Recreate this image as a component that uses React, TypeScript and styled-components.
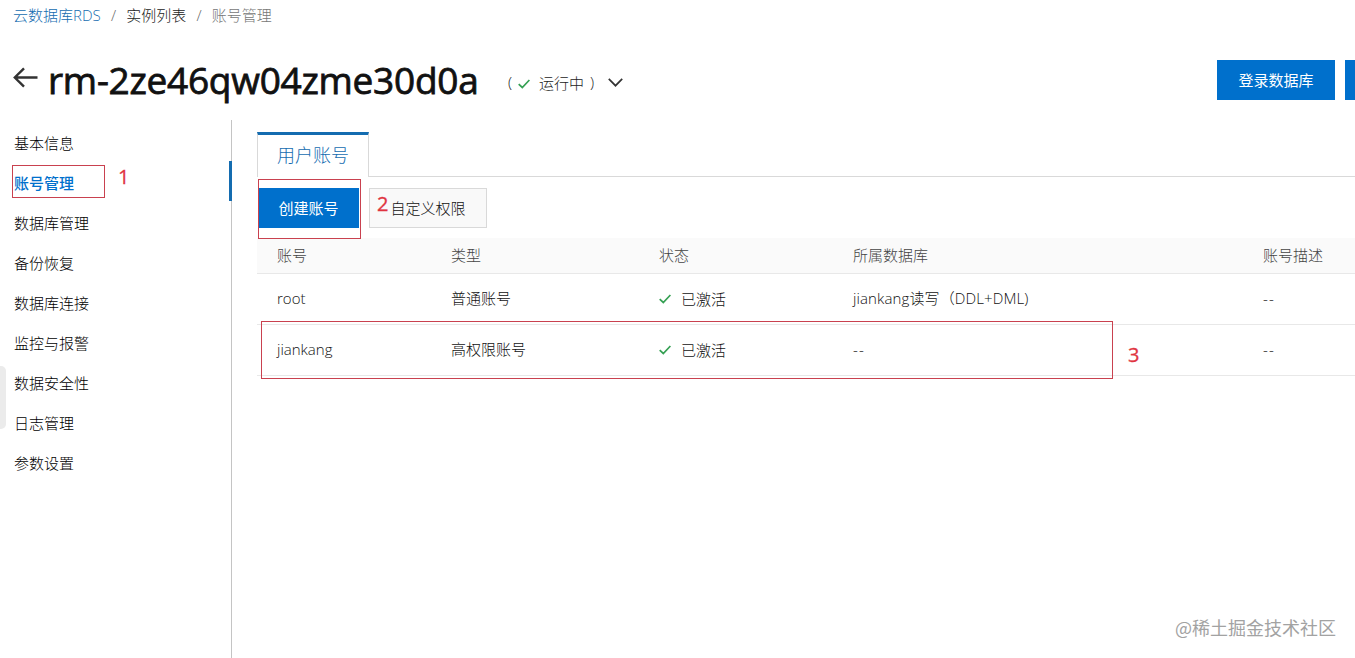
import React from "react";
import styled, { createGlobalStyle } from "styled-components";

const GlobalStyle = createGlobalStyle`
  * { box-sizing: border-box; }
  html, body { margin: 0; padding: 0; background: #fff; overflow: hidden; }
  body {
    font-family: "Open Sans", "Noto Sans CJK SC", sans-serif;
    font-size: 15px;
    font-weight: 300;
    color: #222;
    white-space: nowrap;
  }
`;

const Page = styled.div`
  position: relative;
  width: 1355px;
  height: 658px;
  overflow: hidden;
  display: flex;
  flex-direction: column;
`;

const Breadcrumb = styled.nav`
  display: flex;
  height: 32px;
  padding-left: 13px;
  line-height: 30px;
`;

const Crumb = styled.span<{ $color: string }>`
  color: ${(p) => p.$color};
`;

const Separator = styled.span`
  width: 25.5px;
  text-align: center;
  color: #666;
`;

const Header = styled.header`
  display: flex;
  align-items: flex-start;
  height: 88px;
  padding: 24px 0 0 13px;
`;

const BackIcon = styled.svg`
  width: 25px;
  height: 22px;
  margin: 10px 11px 0 0;
  flex: none;
`;

const Title = styled.h1`
  margin: -1px 0 0 -1px;
  width: 460px;
  font-size: 37px;
  font-weight: 400;
  letter-spacing: -0.25px;
  -webkit-text-stroke: 0.8px #111;
  line-height: 50px;
  color: #111;
`;

const Status = styled.div`
  display: flex;
  align-items: center;
  height: 24px;
  margin-top: 14px;
  color: #222;
`;

const StatusText = styled.span`
  margin: 0 6px 0 9px;
`;

const Check = styled.svg`
  width: 12px;
  height: 10px;
  flex: none;
`;

const StatusCheck = styled.span`
  display: flex;
  margin: 4px 0 0 6px;
`;

const Chevron = styled.svg`
  width: 15px;
  height: 9px;
  margin: 1px 0 0 14px;
`;

const HeaderActions = styled.div`
  display: flex;
  gap: 10px;
  width: 138px;
  margin-left: auto;
  margin-top: 4px;
  overflow: hidden;
`;

const Button = styled.button<{ $primary?: boolean; $width: number }>`
  flex: none;
  width: ${(p) => p.$width}px;
  height: 40px;
  padding: 0 0 2px;
  font: inherit;
  font-weight: ${(p) => (p.$primary ? 400 : 300)};
  border: 1px solid ${(p) => (p.$primary ? "#0070cc" : "#d9d9d9")};
  background: ${(p) => (p.$primary ? "#0070cc" : "#f9f9f9")};
  color: ${(p) => (p.$primary ? "#fff" : "#111")};
`;

const Body = styled.div`
  display: flex;
  flex: 1;
  min-height: 0;
`;

const Sidebar = styled.aside`
  width: 232px;
  padding-top: 1px;
  border-right: 1px solid #c4c4c4;
`;

const NavItem = styled.div<{ $active?: boolean }>`
  height: 40px;
  padding-left: 14px;
  line-height: 45px;
  margin-right: -1px;
  color: ${(p) => (p.$active ? "#0070cc" : "#000")};
  font-weight: ${(p) => (p.$active ? 500 : 300)};
  border-right: 3px solid ${(p) => (p.$active ? "#146cb0" : "transparent")};
`;

const Main = styled.main`
  flex: 1;
  min-width: 0;
  padding: 12px 0 0 25px;
`;

const TabBar = styled.div`
  display: flex;
  height: 45px;
  box-shadow: inset 0 -1px #d9d9d9;
`;

const Tab = styled.div`
  width: 112px;
  border: 1px solid #d9d9d9;
  border-top: 3px solid #146cb0;
  border-bottom: 0;
  background: #fff;
  color: #146cb0;
  font-size: 18px;
  line-height: 41px;
  text-align: center;
`;

const Toolbar = styled.div`
  display: flex;
  gap: 10px;
  padding: 11px 0 10px 1px;
`;

const Row = styled.div<{ $head?: boolean }>`
  display: grid;
  grid-template-columns: 174px 208px 194px 410px 1fr;
  align-items: center;
  height: ${(p) => (p.$head ? 36 : 51)}px;
  padding: 0 0 ${(p) => (p.$head ? 2 : 3)}px 20px;
  border-bottom: 1px solid #e8e8e8;
  background: ${(p) => (p.$head ? "#fafafa" : "transparent")};
  color: ${(p) => (p.$head ? "#444" : "#111")};
`;

const StateCell = styled.div`
  display: flex;
  align-items: center;
  gap: 10px;
  padding-top: 2px;
`;

const Database = styled.span`
  letter-spacing: 0.12px;
`;

const Empty = styled.span`
  letter-spacing: 1.1px;
`;

const Mark = styled.div<{ $x: number; $y: number; $w: number; $h: number }>`
  position: absolute;
  left: ${(p) => p.$x}px;
  top: ${(p) => p.$y}px;
  width: ${(p) => p.$w}px;
  height: ${(p) => p.$h}px;
  border: 1px solid #c9414f;
`;

const MarkNumber = styled.span<{ $x: number; $y: number }>`
  position: absolute;
  left: ${(p) => p.$x}px;
  top: ${(p) => p.$y}px;
  color: #e0343f;
  font-size: 20px;
  font-weight: 400;
  -webkit-text-stroke: 0.3px #e0343f;
  line-height: 24px;
`;

const EdgeHandle = styled.div`
  position: absolute;
  left: 0;
  top: 366px;
  width: 6px;
  height: 63px;
  border-radius: 0 5px 5px 0;
  background: #ebebeb;
`;

const Watermark = styled.div`
  position: absolute;
  right: 19px;
  bottom: 18px;
  font-size: 18px;
  font-weight: 400;
  line-height: 26px;
  color: #a2a2a2;
  font-family: "Noto Sans CJK SC", sans-serif;
`;

const CheckIcon = () => (
  <Check viewBox="0 0 12 10" fill="none" stroke="#35a053" strokeWidth="1.7">
    <path d="M.7 5.2 4.3 8.5 11.4 1" />
  </Check>
);

const navItems = [
  "基本信息", "账号管理", "数据库管理", "备份恢复", "数据库连接",
  "监控与报警", "数据安全性", "日志管理", "参数设置",
];

const accounts = [
  { name: "root", type: "普通账号", db: "jiankang读写（DDL+DML)" },
  { name: "jiankang", type: "高权限账号", db: "" },
];

export default function App() {
  return (
    <Page>
      <GlobalStyle />
      <Breadcrumb>
        <Crumb $color="#146cb0">云数据库RDS</Crumb>
        <Separator>/</Separator>
        <Crumb $color="#222">实例列表</Crumb>
        <Separator>/</Separator>
        <Crumb $color="#777">账号管理</Crumb>
      </Breadcrumb>
      <Header>
        <BackIcon viewBox="0 0 25 22" fill="none" stroke="#333" strokeWidth="2.4">
          <path d="M24.5 11.5H2M11 2.3 1.8 11.5 11 20.7" />
        </BackIcon>
        <Title>rm-2ze46qw04zme30d0a</Title>
        <Status>
          <span>(</span>
          <StatusCheck>
            <CheckIcon />
          </StatusCheck>
          <StatusText>运行中</StatusText>
          <span>)</span>
          <Chevron viewBox="0 0 15 9" fill="none" stroke="#333" strokeWidth="1.7">
            <path d="m.8.9 6.7 6.8L14.2.9" />
          </Chevron>
        </Status>
        <HeaderActions>
          <Button $primary $width={118}>登录数据库</Button>
          <Button $primary $width={118} />
        </HeaderActions>
      </Header>
      <Body>
        <Sidebar>
          {navItems.map((item) => (
            <NavItem key={item} $active={item === "账号管理"}>{item}</NavItem>
          ))}
        </Sidebar>
        <Main>
          <TabBar>
            <Tab>用户账号</Tab>
          </TabBar>
          <Toolbar>
            <Button $primary $width={101}>创建账号</Button>
            <Button $width={118}>自定义权限</Button>
          </Toolbar>
          <Row $head>
            <span>账号</span>
            <span>类型</span>
            <span>状态</span>
            <span>所属数据库</span>
            <span>账号描述</span>
          </Row>
          {accounts.map((a) => (
            <Row key={a.name}>
              <span>{a.name}</span>
              <span>{a.type}</span>
              <StateCell>
                <CheckIcon />
                已激活
              </StateCell>
              {a.db ? <Database>{a.db}</Database> : <Empty>--</Empty>}
              <Empty>--</Empty>
            </Row>
          ))}
        </Main>
      </Body>
      <EdgeHandle />
      <Mark $x={12} $y={165} $w={93} $h={33} />
      <Mark $x={258} $y={179} $w={103} $h={60} />
      <Mark $x={261} $y={321} $w={852} $h={58} />
      <MarkNumber $x={118} $y={165}>1</MarkNumber>
      <MarkNumber $x={377} $y={192}>2</MarkNumber>
      <MarkNumber $x={1128} $y={343}>3</MarkNumber>
      <Watermark>@稀土掘金技术社区</Watermark>
    </Page>
  );
}
